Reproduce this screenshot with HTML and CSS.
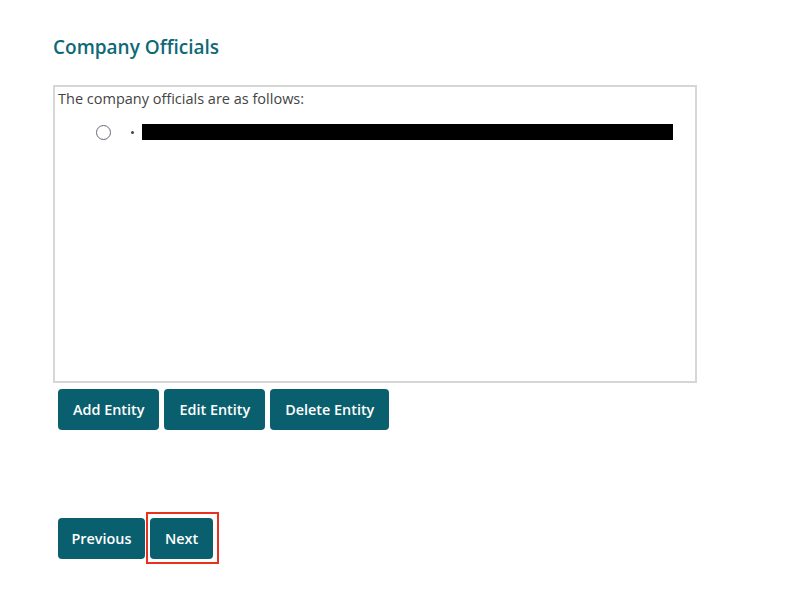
FILE: index.html
```html
<!DOCTYPE html>
<html>
<head>
<meta charset="utf-8">
<link rel="stylesheet" href="styles.css">
</head>
<body>
<div class="page">
  <h2 class="title">Company Officials</h2>
  <div class="box">
    <p class="intro">The company officials are as follows:</p>
    <div class="official">
      <span class="radio"></span>
      <span class="dot"></span>
      <span class="redacted"></span>
    </div>
  </div>
  <div class="actions">
    <button class="btn">Add Entity</button>
    <button class="btn">Edit Entity</button>
    <button class="btn">Delete Entity</button>
  </div>
  <div class="nav">
    <button class="btn btn-prev">Previous</button>
    <div class="focus-wrap">
      <button class="btn btn-next">Next</button>
      <span class="focus-ring"></span>
    </div>
  </div>
</div>
</body>
</html>
```

FILE: styles.css
```css
html, body {
  margin: 0;
  padding: 0;
  background: #ffffff;
}
.page {
  padding: 35px 0 60px 53px;
  font-family: "Open Sans", "DejaVu Sans", sans-serif;
}
.title {
  margin: 0;
  font-size: 19px;
  font-weight: 600;
  color: #0e6877;
  line-height: 24px;
}
.box {
  margin-top: 26px;
  width: 640px;
  height: 294px;
  border: 2px solid #d6d6d6;
}
.intro {
  margin: 3px 0 0 3px;
  font-size: 14.5px;
  line-height: 18px;
  color: #444444;
}
.official {
  display: flex;
  align-items: center;
  margin-top: 15px;
  height: 18px;
}
.radio {
  width: 13px;
  height: 13px;
  border: 1.5px solid #666a78;
  border-radius: 50%;
  margin-left: 41px;
}
.dot {
  width: 3px;
  height: 3px;
  background: #444;
  border-radius: 50%;
  margin-left: 20px;
}
.redacted {
  width: 531px;
  height: 16px;
  background: #000;
  margin-left: 8px;
}
.actions {
  display: flex;
  gap: 5px;
  margin: 6px 0 0 5px;
}
.btn {
  font-family: "Open Sans", "DejaVu Sans", sans-serif;
  font-size: 14.4px;
  font-weight: 600;
  color: #ffffff;
  background: #0a5f6e;
  border: none;
  border-radius: 4px;
  height: 41px;
  padding: 0 15px;
  cursor: pointer;
}
.btn-prev {
  width: 87px;
  padding: 0;
}
.btn-next {
  width: 63px;
  padding: 0;
}
.nav {
  display: flex;
  gap: 5px;
  margin: 88px 0 0 5px;
}
.focus-wrap {
  position: relative;
  display: flex;
}
.focus-ring {
  position: absolute;
  left: -4px;
  right: -6px;
  top: -6px;
  bottom: -5px;
  border: 2px solid #e8321f;
  pointer-events: none;
}
```
